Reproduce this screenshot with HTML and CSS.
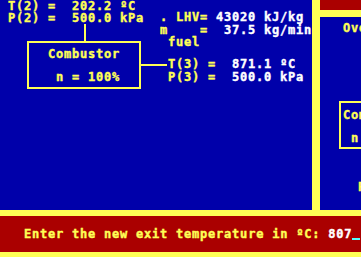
FILE: index.html
```html
<!DOCTYPE html>
<html lang="en">

<head>
    <meta charset="UTF-8">
    <title>Gas Turbine - Combustor</title>
    <link rel="stylesheet" href="styles.css">
</head>

<body>
    <div class="screen">
        <div class="main">
            <div class="panel diagram">
                <pre class="state state-in">T(2) =  202.2 ºC
P(2) =  500.0 kPa</pre>
                <div class="link link-in"></div>

                <pre class="fuel">. LHV= <span class="val">43020 kJ/kg</span>
m    =  <span class="val">37.5 kg/min</span>
 fuel</pre>

                <div class="unit">
                    <div class="unit-name">Combustor</div>
                    <div class="unit-eff"> n = 100%</div>
                </div>
                <div class="link link-out"></div>

                <pre class="state state-out">T(3) =  <span class="val">871.1 ºC</span>
P(3) =  <span class="val">500.0 kPa</span></pre>
            </div>

            <div class="divider"></div>

            <div class="panel side">
                <div class="side-title"></div>
                <div class="side-rule"></div>
                <div class="side-body">
                    <div class="side-head">Overall</div>
                    <div class="unit unit-side">
                        <div class="unit-name">Combustor</div>
                        <div class="unit-eff"> n = 100%</div>
                    </div>
                    <div class="side-label">P(4)</div>
                </div>
            </div>
        </div>

        <div class="rule"></div>
        <div class="prompt">
            <span>Enter the new exit temperature in ºC: </span><span class="entry">807</span><span class="cursor"></span>
        </div>
        <div class="rule rule-end"></div>
    </div>
</body>

</html>
```

FILE: styles.css
```css
body {
    margin: 0;
    background-color: #0000aa;
    color: #ffff55;
    font-family: 'DejaVu Sans Mono', 'Liberation Mono', monospace;
    font-weight: bold;
    font-size: 12px;
    letter-spacing: 0.78px;
    -webkit-text-stroke: 0.4px currentColor;
    overflow: hidden;
}

pre {
    margin: 0;
    font: inherit;
}

.screen {
    width: 361px;
    height: 257px;
    display: flex;
    flex-direction: column;
}

.main {
    height: 210px;
    display: flex;
}

.panel {
    background-color: #0000aa;
    overflow: hidden;
}

.val {
    color: #fff;
}

/* schematic on the left: nodes sit on a free canvas */
.diagram {
    position: relative;
    width: 312px;
}

.state {
    position: absolute;
    line-height: 11.5px;
}

.state-in {
    left: 8px;
    top: 1px;
}

.state-out {
    left: 168px;
    top: 58px;
    line-height: 13px;
}

.fuel {
    position: absolute;
    left: 160px;
    top: 11px;
    line-height: 12.5px;
}

.unit {
    position: absolute;
    left: 27px;
    top: 41px;
    height: 44px;
    border: 2px solid #ffff55;
    padding-left: 19px;
    width: 91px;
}

.unit-name {
    margin-top: 5px;
    line-height: 12px;
}

.unit-eff {
    margin-top: 11px;
    line-height: 12px;
    white-space: pre;
}

.link {
    position: absolute;
    background-color: #ffff55;
}

.link-in {
    left: 84px;
    top: 24px;
    width: 2px;
    height: 17px;
}

.link-out {
    left: 141px;
    top: 64px;
    width: 26px;
    height: 2px;
}

.divider {
    width: 8px;
    background-color: #ffff55;
}

/* right hand panel, cut off by the window */
.side {
    flex: 1;
    display: flex;
    flex-direction: column;
}

.side-title {
    height: 10px;
    background-color: #aa0000;
}

.side-rule {
    height: 7px;
    background-color: #ffff55;
}

.side-body {
    flex: 1;
    position: relative;
}

.side-head {
    position: absolute;
    left: 23px;
    top: 5px;
    line-height: 12px;
    white-space: nowrap;
}

.unit-side {
    left: 19px;
    top: 84px;
    padding-left: 2px;
    width: 120px;
}

.unit-side .unit-name {
    margin-top: 6px;
}

.side-label {
    position: absolute;
    left: 38px;
    top: 164px;
    line-height: 12px;
}

.rule {
    height: 6px;
    background-color: #ffff55;
}

.rule-end {
    height: 5px;
}

.prompt {
    height: 36px;
    background-color: #aa0000;
    display: flex;
    align-items: center;
    padding-left: 24px;
    white-space: pre;
}

.entry {
    color: #fff;
}

.cursor {
    width: 8px;
    height: 2px;
    margin-top: 10px;
    background-color: #55ffff;
    -webkit-text-stroke: 0;
}
```
